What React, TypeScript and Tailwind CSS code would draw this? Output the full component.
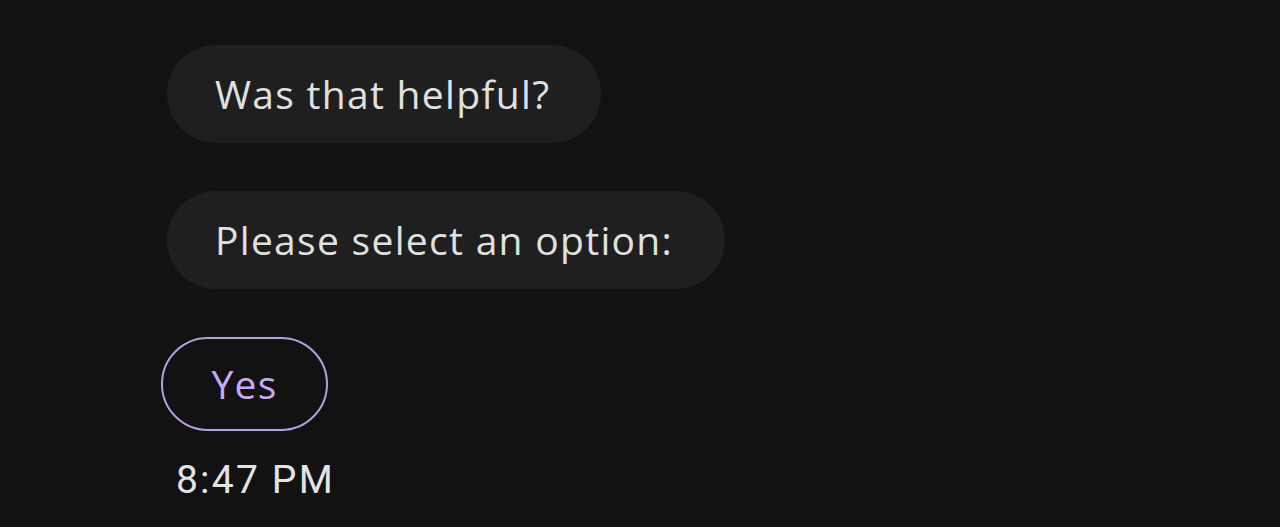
const bubbleFont = { fontFamily: "'Open Sans', 'Noto Sans', sans-serif" };

function Bubble({ text, width }: { text: string; width: string }) {
  return (
    <div
      className={`flex h-[98px] items-center rounded-full bg-[#1f1f1f] pl-[48px] text-[39px] tracking-[1.3px] text-[#e0e0e0] ${width}`}
      style={bubbleFont}
    >
      {text}
    </div>
  );
}

export default function App() {
  return (
    <div className="h-[527px] w-[1280px] overflow-hidden bg-[#121212]">
      <div className="flex flex-col items-start pl-[167px] pt-[45px]">
        <Bubble text="Was that helpful?" width="w-[434px]" />
        <div className="mt-[48px]">
          <Bubble text="Please select an option:" width="w-[558px]" />
        </div>
        <button
          className="-ml-[6px] mt-[48px] flex h-[94px] w-[167px] items-center justify-center rounded-full border-2 border-[#b79ee0] text-[39px] tracking-[1.3px] text-[#c9a8f2]"
          style={bubbleFont}
        >
          Yes
        </button>
        <div className="ml-[9px] mt-[30px] font-['Roboto',sans-serif] text-[39px] leading-none tracking-[2.2px] text-[#e3e3e3]">
          8:47 PM
        </div>
      </div>
    </div>
  );
}
